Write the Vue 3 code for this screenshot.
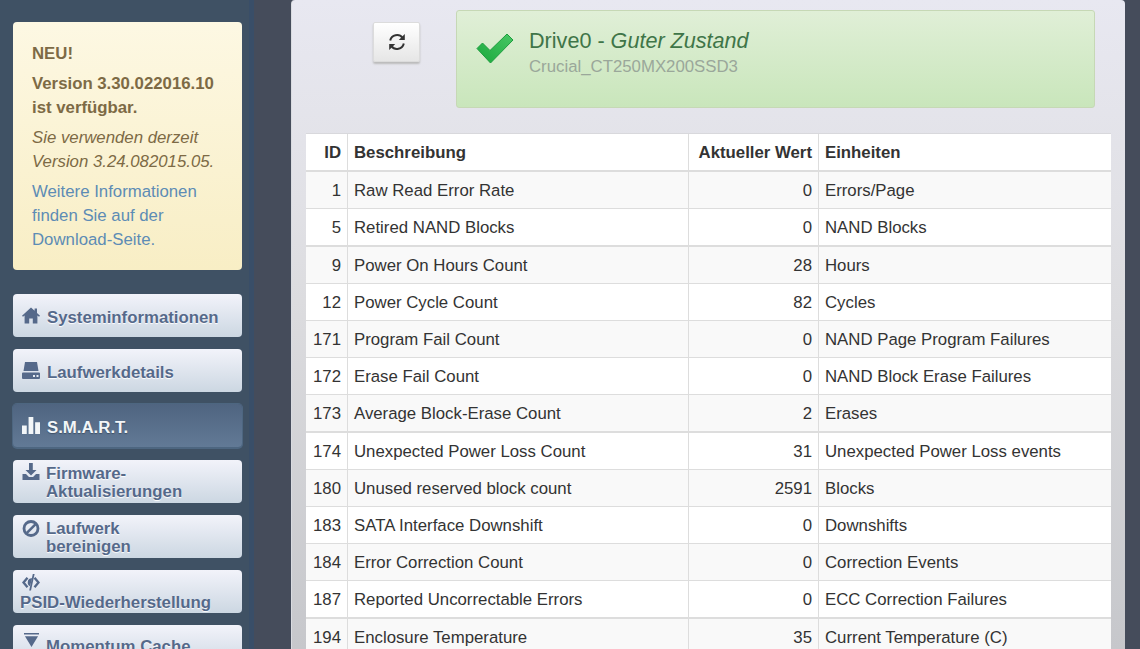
<script setup>
const rows = [
  [1, 'Raw Read Error Rate', 0, 'Errors/Page'],
  [5, 'Retired NAND Blocks', 0, 'NAND Blocks'],
  [9, 'Power On Hours Count', 28, 'Hours'],
  [12, 'Power Cycle Count', 82, 'Cycles'],
  [171, 'Program Fail Count', 0, 'NAND Page Program Failures'],
  [172, 'Erase Fail Count', 0, 'NAND Block Erase Failures'],
  [173, 'Average Block-Erase Count', 2, 'Erases'],
  [174, 'Unexpected Power Loss Count', 31, 'Unexpected Power Loss events'],
  [180, 'Unused reserved block count', 2591, 'Blocks'],
  [183, 'SATA Interface Downshift', 0, 'Downshifts'],
  [184, 'Error Correction Count', 0, 'Correction Events'],
  [187, 'Reported Uncorrectable Errors', 0, 'ECC Correction Failures'],
  [194, 'Enclosure Temperature', 35, 'Current Temperature (C)'],
]
</script>

<template>
  <div class="page">
    <aside class="sidebar">
      <div class="notice">
        <p class="new">NEU!</p>
        <p class="ver">Version 3.30.022016.10<br>ist verfügbar.</p>
        <p class="cur">Sie verwenden derzeit<br>Version 3.24.082015.05.</p>
        <p class="more">Weitere Informationen<br>finden Sie auf der<br>Download-Seite.</p>
      </div>
      <nav class="nav">
        <a class="btn single">
          <svg class="ic" viewBox="0 0 18 16"><path d="M9 0 0 8.200l1 1L2.600 8v8h4.600v-5h3.600v5h4.600V8L17 9.200l1-1L15 5.400V1h-2.400v2.200z"/></svg>
          <span>Systeminformationen</span>
        </a>
        <a class="btn single">
          <svg class="ic" viewBox="0 0 18 17"><path d="M3 0h12l1.500 9h-15zM1 10.500h16a1 1 0 0 1 1 1V16a1 1 0 0 1-1 1H1a1 1 0 0 1-1-1v-4.500a1 1 0 0 1 1-1z"/><path fill="#e6ebf2" d="M11 13h2v2h-2zM14.500 13h2v2h-2z"/></svg>
          <span>Laufwerkdetails</span>
        </a>
        <a class="btn single active">
          <svg class="ic" viewBox="0 0 17 16"><path d="M0 8h4.500v8H0zM6.200 0h4.500v16H6.200zM12.400 5H17v11h-4.600z"/></svg>
          <span>S.M.A.R.T.</span>
        </a>
        <a class="btn double">
          <svg class="ic ic-high" viewBox="0 0 17 17"><path d="M6.500 0h3.800v7H14l-5.500 5.500L3 7h3.500zM0 11h3.500l3 3h4l3-3H17v6H0z"/></svg>
          <span>Firmware-<br>Aktualisierungen</span>
        </a>
        <a class="btn double">
          <svg class="ic" viewBox="0 0 17 17"><circle cx="8.500" cy="8.500" r="7" fill="none" stroke="#55698a" stroke-width="2.800"/><path d="M3.500 12 12 3.500l1.800 1.800L5.300 13.800z"/></svg>
          <span>Laufwerk<br>bereinigen</span>
        </a>
        <a class="btn psid">
          <svg class="ic" viewBox="0 0 18 17"><path fill="none" stroke="#55698a" stroke-width="2.400" d="M5.500 3.800 1.500 8.500l4 4.700M12.500 3.800l4 4.700-4 4.700"/><path d="M5.800 8a3.700 3.700 0 0 1 4.400-3.700L8 12.200A3.900 3.900 0 0 1 5.800 8z"/><path d="M10.800 0h1.800L9 16.500H7.200z"/></svg>
          <span>PSID-Wiederherstellung</span>
        </a>
        <a class="btn mom">
          <svg class="ic" viewBox="0 0 16 16"><path d="M0 0h16v1.500H0zM1 3.500h14L8 15z"/></svg>
          <span>Momentum Cache</span>
        </a>
      </nav>
    </aside>
    <main class="panel">
      <div class="top">
        <div class="refresh-col">
          <button class="refresh" aria-label="Aktualisieren">
            <svg viewBox="0 0 18 18" width="18" height="18"><path fill="none" stroke="#333" stroke-width="2" d="M2.200 7.500A7 7 0 0 1 14.600 4.800M15.800 10.500A7 7 0 0 1 3.400 13.200"/><path fill="#333" d="M16.800 1v6h-6zM1.200 17v-6h6z"/></svg>
          </button>
        </div>
        <div class="status">
          <svg class="check" viewBox="0 0 38 32" width="38" height="32">
            <defs><linearGradient id="tick" x1="0" y1="1" x2="1" y2="0"><stop offset="0" stop-color="#1aa83c"/><stop offset="1" stop-color="#48c765"/></linearGradient></defs>
            <path fill="url(#tick)" stroke="#1c9d3d" stroke-width="1" stroke-linejoin="round" d="M1 16.500 6.500 11 14 18.500 31 2l6 6-22.500 23z"/>
          </svg>
          <div>
            <div class="drive">Drive0 - <em>Guter Zustand</em></div>
            <div class="model">Crucial_CT250MX200SSD3</div>
          </div>
        </div>
      </div>
      <table class="table">
        <colgroup><col class="c1"><col class="c2"><col class="c3"><col class="c4"></colgroup>
        <thead>
          <tr><th class="r">ID</th><th>Beschreibung</th><th class="r">Aktueller Wert</th><th>Einheiten</th></tr>
        </thead>
        <tbody>
          <tr v-for="(row, i) in rows" :key="row[0]" :class="{ odd: i % 2 === 0, tall: i % 5 === 1 }">
            <td class="r">{{ row[0] }}</td><td>{{ row[1] }}</td><td class="r">{{ row[2] }}</td><td>{{ row[3] }}</td>
          </tr>
        </tbody>
      </table>
    </main>
  </div>
</template>

<style>
html, body { margin: 0; overflow: hidden; background: #454c5b; }
</style>

<style scoped>
.page {
  display: flex;
  width: 1140px;
  height: 649px;
  overflow: hidden;
  background: #454c5b;
  font-family: "Liberation Sans", Arial, sans-serif;
  font-size: 16.800px;
}
.sidebar {
  width: 254px;
  flex: none;
  box-sizing: border-box;
  padding: 22px 0 0 13px;
  background: #3f5164;
  border-right: 5px solid #394e68;
}
.notice {
  width: 229px;
  height: 248px;
  box-sizing: border-box;
  padding: 20px 19px 0;
  border-radius: 4px;
  background: linear-gradient(#fdf8e3, #f8eec5);
  color: #7d6a45;
  line-height: 24px;
}
.notice p { margin: 0 0 6px; }
.new, .ver { font-weight: 700; }
.cur { font-style: italic; }
.more { color: #5d8cb5; }
.nav {
  display: flex;
  flex-direction: column;
  gap: 12.200px;
  margin-top: 24px;
  width: 229px;
}
.btn {
  display: flex;
  box-sizing: border-box;
  height: 43px;
  flex: none;
  border-radius: 4px;
  background: linear-gradient(#f2f3fa, #ccd7e2);
  color: #55698a;
  font-weight: 700;
  line-height: 18px;
  text-shadow: 0 1px 1px #fff;
}
.ic { flex: none; align-self: flex-start; width: 18px; height: 17px; fill: #55698a; }
.single { align-items: center; padding-left: 9px; gap: 7px; }
.single .ic { align-self: center; }
.single span { margin-top: 5px; }
.active {
  background: linear-gradient(#4f6480, #627a96);
  color: #f2f6f8;
  text-shadow: 0 1px 1px #3f5066;
  box-shadow: 0 1px 0 1px #4d6680, 0 0 0 1px #4d6680;
}
.active .ic { fill: #f2f6f8; }
.double { padding: 5px 0 0 9px; gap: 6px; }
.ic-high { margin-top: -2px; }
.psid { flex-direction: column; padding: 4px 0 0 7px; }
.psid .ic { margin-left: 2px; }
.psid span { display: block; margin-top: 3px; }
.mom { padding: 8px 0 0 11px; gap: 7px; }
.mom .ic { width: 15px; height: 15px; }
.mom span { margin-top: 5px; }
.panel {
  width: 834px;
  height: 649px;
  flex: none;
  margin-left: 37px;
  box-sizing: border-box;
  padding: 0 13px 0 14px;
  background: linear-gradient(#e8e8f1, #e1e1e6 200px, #dcdcdf 300px, #c6c7cb);
  border-left: 1px solid #d9dbe0;
  border-radius: 4px 4px 0 0;
}
.top { display: flex; height: 134px; }
.refresh-col { width: 150px; flex: none; padding: 22px 0 0 67px; box-sizing: border-box; }
.refresh {
  display: flex;
  align-items: center;
  justify-content: center;
  width: 47px;
  height: 40px;
  padding: 0;
  border: 1px solid #dcdcdc;
  border-radius: 2px;
  background: linear-gradient(#fff, #e6e6e6);
  box-shadow: 0 2px 2px #bbb;
}
.status {
  display: flex;
  align-items: flex-start;
  gap: 15px;
  width: 639px;
  height: 98px;
  margin-top: 10px;
  box-sizing: border-box;
  padding: 16px 0 0 19px;
  border: 1px solid #c6d8b5;
  border-radius: 3px;
  background: linear-gradient(#e0efd7, #c9e6bb);
}
.check { margin-top: 5px; }
.drive { color: #3f7548; font-size: 21.600px; line-height: 27px; }
.model { margin-top: 1px; color: #9aa79a; font-size: 16.800px; line-height: 24px; }
.table {
  width: 805px;
  border-collapse: separate;
  border-spacing: 0;
  table-layout: fixed;
  background: #fff;
  color: #333;
  box-shadow: 0 -1px 0 #d8d8dc;
}
.c1 { width: 41px; }
.c2 { width: 341px; }
.c3 { width: 130px; }
.c4 { width: 293px; }
th, td {
  box-sizing: border-box;
  padding: 2px 6px 0;
  text-align: left;
  border-left: 1px solid #ddd;
  white-space: nowrap;
}
th:first-child, td:first-child { border-left: 0; }
th { height: 38px; border-bottom: 2px solid #ddd; color: #333; font-weight: 700; }
td { height: 37px; border-bottom: 1px solid #ddd; }
.tall td { height: 38px; border-bottom: 2px solid #ddd; }
th.r, td.r { text-align: right; }
.odd td { background: #f9f9f9; }
</style>
